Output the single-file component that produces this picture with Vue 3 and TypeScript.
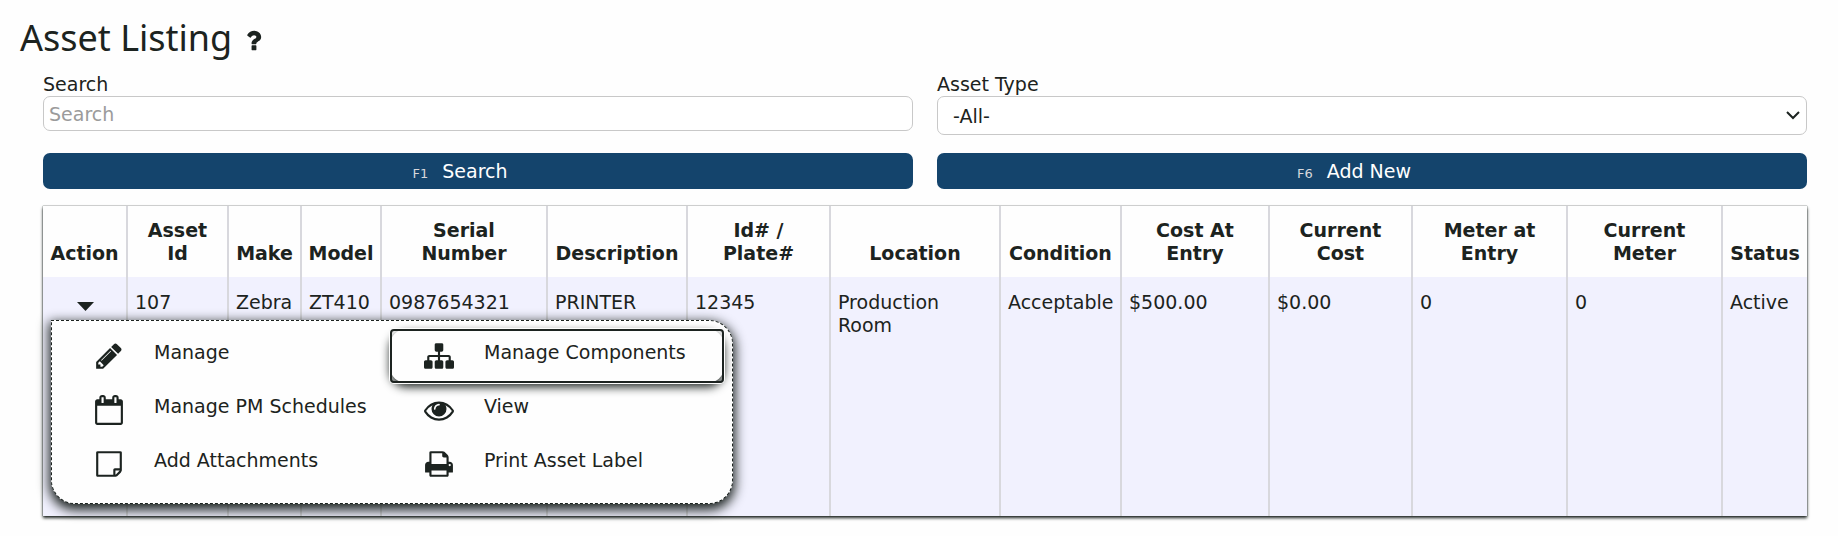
<script setup lang="ts">
import { ref } from 'vue'

interface Column {
  label: string
  value: string
  width: number
}

interface MenuAction {
  label: string
  icon: string
  shift?: number
}

const search = ref('')
const assetType = ref('all')
const menuOpen = ref(true)
const current = ref('Manage Components')

const columns: Column[] = [
  { label: 'Asset\nId', value: '107', width: 101 },
  { label: 'Make', value: 'Zebra', width: 73 },
  { label: 'Model', value: 'ZT410', width: 80 },
  { label: 'Serial\nNumber', value: '0987654321', width: 166 },
  { label: 'Description', value: 'PRINTER', width: 140 },
  { label: 'Id# /\nPlate#', value: '12345', width: 143 },
  { label: 'Location', value: 'Production\nRoom', width: 170 },
  { label: 'Condition', value: 'Acceptable', width: 121 },
  { label: 'Cost At\nEntry', value: '$500.00', width: 148 },
  { label: 'Current\nCost', value: '$0.00', width: 143 },
  { label: 'Meter at\nEntry', value: '0', width: 155 },
  { label: 'Current\nMeter', value: '0', width: 155 },
  { label: 'Status', value: 'Active', width: 84 },
]
const actionWidth = 85
const total = columns.reduce((sum, c) => sum + c.width, actionWidth)
const share = (w: number) => ({ width: `${(w / total) * 100}%` })

const actions: MenuAction[] = [
  {
    label: 'Manage',
    shift: 128,
    icon: 'M363 1536l91-91-235-235-91 91v107h128v128h107zm523-928q0-22-22-22-10 0-17 7l-542 542q-7 7-7 17 0 22 22 22 10 0 17-7l542-542q7-7 7-17zm-54-192l416 416-832 832h-416v-416zm683 96q0 53-37 90l-166 166-416-416 166-165q36-38 90-38 53 0 91 38l235 234q37 39 37 91z',
  },
  {
    label: 'Manage Components',
    icon: 'M1792 1248v320q0 40-28 68t-68 28h-320q-40 0-68-28t-28-68v-320q0-40 28-68t68-28h96v-192h-512v192h96q40 0 68 28t28 68v320q0 40-28 68t-68 28h-320q-40 0-68-28t-28-68v-320q0-40 28-68t68-28h96v-192h-512v192h96q40 0 68 28t28 68v320q0 40-28 68t-68 28h-320q-40 0-68-28t-28-68v-320q0-40 28-68t68-28h96v-192q0-52 38-90t90-38h512v-192h-96q-40 0-68-28t-28-68v-320q0-40 28-68t68-28h320q40 0 68 28t28 68v320q0 40-28 68t-68 28h-96v192h512q52 0 90 38t38 90v192h96q40 0 68 28t28 68z',
  },
  {
    label: 'Manage PM Schedules',
    icon: 'M192 1664h1408v-1024h-1408v1024zm384-1216v-288q0-14-9-23t-23-9h-64q-14 0-23 9t-9 23v288q0 14 9 23t23 9h64q14 0 23-9t9-23zm768 0v-288q0-14-9-23t-23-9h-64q-14 0-23 9t-9 23v288q0 14 9 23t23 9h64q14 0 23-9t9-23zm384-64v1280q0 52-38 90t-90 38h-1408q-52 0-90-38t-38-90v-1280q0-52 38-90t90-38h128v-96q0-66 47-113t113-47h64q66 0 113 47t47 113v96h384v-96q0-66 47-113t113-47h64q66 0 113 47t47 113v96h128q52 0 90 38t38 90z',
  },
  {
    label: 'View',
    icon: 'M1664 960q-152-236-381-353 61 104 61 225 0 185-131.5 316.5t-316.5 131.5-316.5-131.5-131.5-316.5q0-121 61-225-229 117-381 353 133 205 333.5 326.5t434.5 121.5 434.5-121.5 333.5-326.5zm-720-384q0-20-14-34t-34-14q-125 0-214.5 89.5t-89.5 214.5q0 20 14 34t34 14 34-14 14-34q0-86 61-147t147-61q20 0 34-14t14-34zm848 384q0 34-20 69-140 230-376.5 368.5t-499.5 138.5-499.5-139-376.5-368q-20-35-20-69t20-69q140-229 376.5-368t499.5-139 499.5 139 376.5 368q20 35 20 69z',
  },
  {
    label: 'Add Attachments',
    shift: 128,
    icon: 'M1400 1280h-248v248q29-10 41-22l185-185q12-12 22-41zm-280-128h288v-896h-1280v1280h896v-288q0-40 28-68t68-28zm416-928v1024q0 40-20 88t-48 76l-184 184q-28 28-76 48t-88 20h-1024q-40 0-68-28t-28-68v-1344q0-40 28-68t68-28h1344q40 0 68 28t28 68z',
  },
  {
    label: 'Print Asset Label',
    icon: 'M448 1536h896v-256h-896v256zm0-640h896v-384h-160q-40 0-68-28t-28-68v-160h-640v640zm1152 64q0-26-19-45t-45-19-45 19-19 45 19 45 45 19 45-19 19-45zm128 0v416q0 13-9.500 22.500t-22.500 9.500h-224v160q0 40-28 68t-68 28h-960q-40 0-68-28t-28-68v-160h-224q-13 0-22.500-9.500t-9.500-22.500v-416q0-79 56.500-135.500t135.500-56.500h64v-544q0-40 28-68t68-28h672q40 0 88 20t76 48l152 152q28 28 48 76t20 88v256h64q79 0 135.500 56.500t56.500 135.500z',
  },
]
</script>

<template>
  <main class="page">
    <header class="title">
      <h1>Asset Listing</h1>
      <button type="button" class="help" aria-label="Help">
        <svg viewBox="0 0 1792 1792" aria-hidden="true">
          <path d="M1088 1256v240q0 16-12 28t-28 12h-240q-16 0-28-12t-12-28v-240q0-16 12-28t28-12h240q16 0 28 12t12 28zm316-600q0 54-15.500 101t-35 76.500-55 59.500-57.500 43.500-61 35.500q-41 23-68.500 65t-27.500 67q0 17-12 32.500t-28 15.500h-240q-15 0-25.500-18.500t-10.500-37.500v-45q0-83 65-156.500t143-108.500q59-27 84-56t25-76q0-42-46.500-74t-107.500-32q-65 0-108 29-35 25-107 115-13 16-31 16-12 0-25-8l-164-125q-13-10-15.500-25t5.500-28q160-266 464-266 80 0 161 31t146 83 106 127.500 41 158.500z" />
        </svg>
      </button>
    </header>

    <form class="filters" @submit.prevent>
      <div class="field">
        <label for="search">Search</label>
        <input id="search" v-model="search" type="text" placeholder="Search" />
      </div>
      <div class="field">
        <label for="asset-type">Asset Type</label>
        <div class="select">
          <select id="asset-type" v-model="assetType">
            <option value="all">-All-</option>
          </select>
          <svg class="chevron" viewBox="0 0 14 9" aria-hidden="true"><path d="M1 1l6 6 6-6" /></svg>
        </div>
      </div>
      <button type="submit" class="primary"><kbd>F1</kbd><span>Search</span></button>
      <button type="button" class="primary"><kbd>F6</kbd><span>Add New</span></button>
    </form>

    <table class="assets">
      <colgroup>
        <col :style="share(actionWidth)" />
        <col v-for="c in columns" :key="c.label" :style="share(c.width)" />
      </colgroup>
      <thead>
        <tr>
          <th scope="col">Action</th>
          <th v-for="c in columns" :key="c.label" scope="col">{{ c.label }}</th>
        </tr>
      </thead>
      <tbody>
        <tr>
          <td class="action">
            <button type="button" class="toggle" aria-label="Row actions" :aria-expanded="menuOpen" @click="menuOpen = !menuOpen">
              <svg viewBox="0 0 17 9" aria-hidden="true"><path d="M0 0h17L8.500 9z" /></svg>
            </button>
            <div v-if="menuOpen" class="menu">
              <button
                v-for="a in actions"
                :key="a.label"
                type="button"
                class="item"
                :class="{ current: a.label === current }"
                @mouseenter="current = a.label"
              >
                <svg viewBox="0 0 1792 1792" aria-hidden="true">
                  <path :d="a.icon" :transform="`translate(${a.shift ?? 0} 0)`" />
                </svg>
                <span>{{ a.label }}</span>
              </button>
            </div>
          </td>
          <td v-for="c in columns" :key="c.label">{{ c.value }}</td>
        </tr>
      </tbody>
    </table>
  </main>
</template>

<style>
body {
  margin: 0;
  background: #fefefe;
}
</style>

<style scoped>
.page {
  padding: 12px 31px 16px 43px;
  color: #1c2320;
  font: 19px/23px 'DejaVu Sans', Verdana, sans-serif;
}
button,
input,
select {
  box-sizing: border-box;
  margin: 0;
  font: inherit;
  color: inherit;
}
svg {
  display: block;
  fill: currentColor;
}
.title {
  display: flex;
  align-items: center;
  gap: 8px;
  margin: 0 0 9px -23px;
}
h1 {
  margin: 0;
  font: 400 36px/52px 'Noto Sans', 'Segoe UI', sans-serif;
}
.help {
  padding: 4px 0 0;
  border: 0;
  background: none;
}
.help svg {
  width: 27px;
  height: 27px;
}
.filters {
  display: grid;
  grid-template-columns: 1fr 1fr;
  column-gap: 24px;
  row-gap: 18px;
}
.field {
  display: flex;
  flex-direction: column;
}
input {
  height: 35px;
  padding: 0 5px;
  border: 1px solid #c8c8c8;
  border-radius: 7px;
  background: #fff;
}
input::placeholder {
  color: #9b9b9b;
  opacity: 1;
}
.select {
  position: relative;
}
select {
  display: block;
  width: 100%;
  height: 39px;
  padding: 2px 32px 0 15px;
  border: 1px solid #c8c8c8;
  border-radius: 7px;
  background: #fff;
  appearance: none;
}
.chevron {
  position: absolute;
  top: 15px;
  right: 7px;
  width: 14px;
  height: 9px;
  fill: none;
  stroke: currentColor;
  stroke-width: 2;
  pointer-events: none;
}
.primary {
  display: flex;
  justify-content: center;
  align-items: baseline;
  gap: 14px;
  height: 36px;
  padding: 7px 36px 5px 0;
  border: 0;
  border-radius: 7px;
  background: #14446c;
  color: #fff;
}
kbd {
  font: 13px/20px 'DejaVu Sans', Verdana, sans-serif;
  color: #d8d8dc;
}
.assets {
  width: 100%;
  margin-top: 17px;
  table-layout: fixed;
  border-spacing: 0;
  background: #fefefe;
  box-shadow: 0 2px 3px #1c2320, 0 0 1px #1c2320;
}
th,
td {
  padding: 13px 6px 12px;
  border-right: 2px solid #d8d8dd;
  white-space: pre-line;
}
th {
  font-weight: 700;
  text-align: center;
  vertical-align: bottom;
}
td {
  height: 213px;
  padding-top: 14px;
  padding-left: 7px;
  vertical-align: top;
  background: #f1f1fe;
}
th:last-child,
td:last-child {
  border-right: 0;
}
.action {
  position: relative;
}
.toggle {
  display: flex;
  width: 100%;
  justify-content: center;
  padding: 11px 0 4px;
  border: 0;
  background: none;
}
.toggle svg {
  width: 17px;
  height: 9px;
}
.menu {
  position: absolute;
  z-index: 1;
  top: 43px;
  left: 8px;
  display: grid;
  grid-template-columns: 330px 334px;
  padding: 8px 8px 12px;
  border: 1px dashed #1c2320;
  border-radius: 0 24px 24px 24px;
  background: #fefefe;
  box-shadow: 0 4px 12px 2px #1c2320;
}
.item {
  position: relative;
  display: flex;
  align-items: flex-start;
  height: 54px;
  gap: 30px;
  padding: 12px 8px 12px 34px;
  border: 0;
  border-radius: 16px;
  background: #fefefe;
  text-align: left;
  white-space: nowrap;
}
.item svg {
  flex: none;
  width: 30px;
  height: 30px;
}
.current {
  z-index: 1;
  box-shadow: 0 4px 10px #1c2320;
}
.current::after {
  content: '';
  position: absolute;
  inset: 0;
  border: 2px solid #1c2320;
  border-radius: 4px;
  box-shadow: 0 0 0 1px #fefefe;
}
</style>
